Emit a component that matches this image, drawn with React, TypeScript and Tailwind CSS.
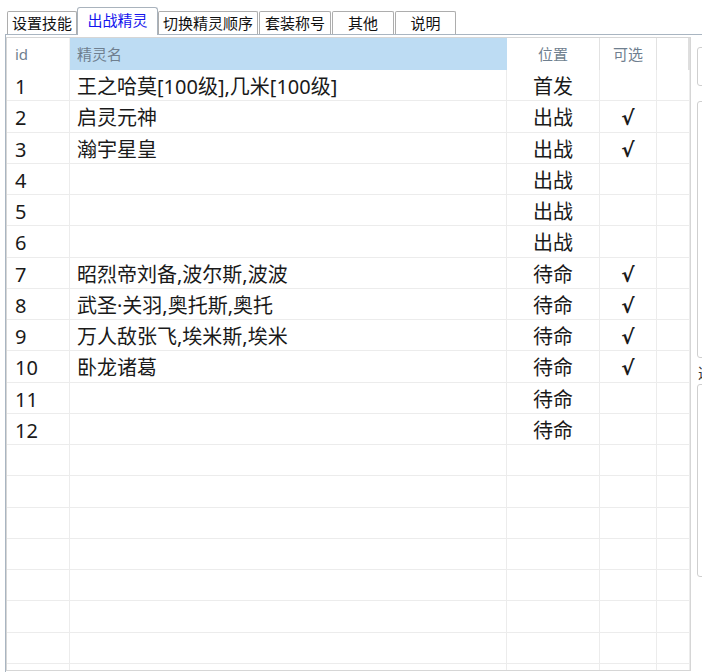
import React from "react";

type Row = {
  id: number;
  name: string;
  pos: string;
  ok: boolean;
};

const tabs = [
  { label: "设置技能", w: "w-[70px]", ml: "ml-0", active: false },
  { label: "出战精灵", w: "w-[81px]", ml: "ml-0", active: true },
  { label: "切换精灵顺序", w: "w-[100px]", ml: "ml-0", active: false },
  { label: "套装称号", w: "w-[72px]", ml: "ml-[1px]", active: false },
  { label: "其他", w: "w-[62px]", ml: "ml-[1px]", active: false },
  { label: "说明", w: "w-[61px]", ml: "ml-[1px]", active: false },
];

const rows: Row[] = [
  { id: 1, name: "王之哈莫[100级],几米[100级]", pos: "首发", ok: false },
  { id: 2, name: "启灵元神", pos: "出战", ok: true },
  { id: 3, name: "瀚宇星皇", pos: "出战", ok: true },
  { id: 4, name: "", pos: "出战", ok: false },
  { id: 5, name: "", pos: "出战", ok: false },
  { id: 6, name: "", pos: "出战", ok: false },
  { id: 7, name: "昭烈帝刘备,波尔斯,波波", pos: "待命", ok: true },
  { id: 8, name: "武圣·关羽,奥托斯,奥托", pos: "待命", ok: true },
  { id: 9, name: "万人敌张飞,埃米斯,埃米", pos: "待命", ok: true },
  { id: 10, name: "卧龙诸葛", pos: "待命", ok: true },
  { id: 11, name: "", pos: "待命", ok: false },
  { id: 12, name: "", pos: "待命", ok: false },
];

// empty rows fill the rest of the grid
const blanks = Array.from({ length: 8 }, (_, i) => i);

const cell = "h-[31.25px] border-b border-r border-[#ececec] flex items-center pt-[4px]";

export default function App() {
  return (
    <div className="h-[672px] w-[702px] overflow-hidden bg-white font-['Noto_Sans','Noto_Sans_CJK_SC',sans-serif] text-[#1a1a1a]">
      {/* tab strip */}
      <div className="flex h-[34px] items-end pl-[7px]">
        {tabs.map((t) =>
          t.active ? (
            <div
              key={t.label}
              className={`${t.w} ${t.ml} relative z-10 -mb-px flex h-[28px] items-center justify-center rounded-t-[3px] border border-b-0 border-[#a9b3bd] bg-white pb-[2px] text-[15px] text-[#1515ee]`}
            >
              {t.label}
            </div>
          ) : (
            <div
              key={t.label}
              className={`${t.w} ${t.ml} flex h-[23px] items-center justify-center rounded-t-[2px] border border-b-0 border-[#adadad] bg-white text-[15px] text-[#111]`}
            >
              {t.label}
            </div>
          )
        )}
      </div>

      {/* tab page */}
      <div className="ml-[5px] flex h-[638px] border-l border-t border-[#a9b5c1]">
        <div className="mt-[2px] h-[634px] w-[685px] shrink-0 overflow-hidden border border-[#d6d6d6]">
          {/* header */}
          <div className="grid h-[32px] grid-cols-[63px_437px_93px_57px_33px] text-[15px] text-[#6f7f8f]">
            <div className="flex items-center border-r border-[#f0f0f0] pl-[8px]">id</div>
            <div className="flex items-center bg-[#bddcf3] pl-[7px]">精灵名</div>
            <div className="flex items-center justify-center border-r border-[#e2e2e2]">位置</div>
            <div className="flex items-center justify-center border-r border-[#e2e2e2]">可选</div>
            <div className="border-r-2 border-[#dedede]" />
          </div>

          {/* rows */}
          <div className="grid grid-cols-[63px_437px_93px_57px_33px] text-[20px]">
            {rows.map((r) => (
              <React.Fragment key={r.id}>
                <div className={`${cell} pl-[8px]`}>{r.id}</div>
                <div className={`${cell} pl-[7px]`}>{r.name}</div>
                <div className={`${cell} justify-center`}>{r.pos}</div>
                <div className={`${cell} justify-center font-['DejaVu_Sans',sans-serif] text-[20px] font-bold`}>
                  {r.ok ? "√" : ""}
                </div>
                <div className={cell} />
              </React.Fragment>
            ))}
            {blanks.map((b) => (
              <React.Fragment key={`b-${b}`}>
                <div className={cell} />
                <div className={cell} />
                <div className={cell} />
                <div className={cell} />
                <div className={cell} />
              </React.Fragment>
            ))}
          </div>
        </div>

        {/* right side panels, mostly cut off */}
        <div className="ml-[6px] flex w-[40px] shrink-0 flex-col">
          <div className="mt-[12px] h-[39px] rounded-[3px] border border-[#cfcfcf]" />
          <div className="mt-[15px] h-[257px] rounded-[3px] border border-[#cfcfcf]" />
          <div className="mt-[6px] pl-[1px] text-[14px] leading-[18px] text-[#333]">选择</div>
          <div className="mt-[2px] h-[193px] rounded-[3px] border border-[#cfcfcf]" />
        </div>
      </div>
    </div>
  );
}
